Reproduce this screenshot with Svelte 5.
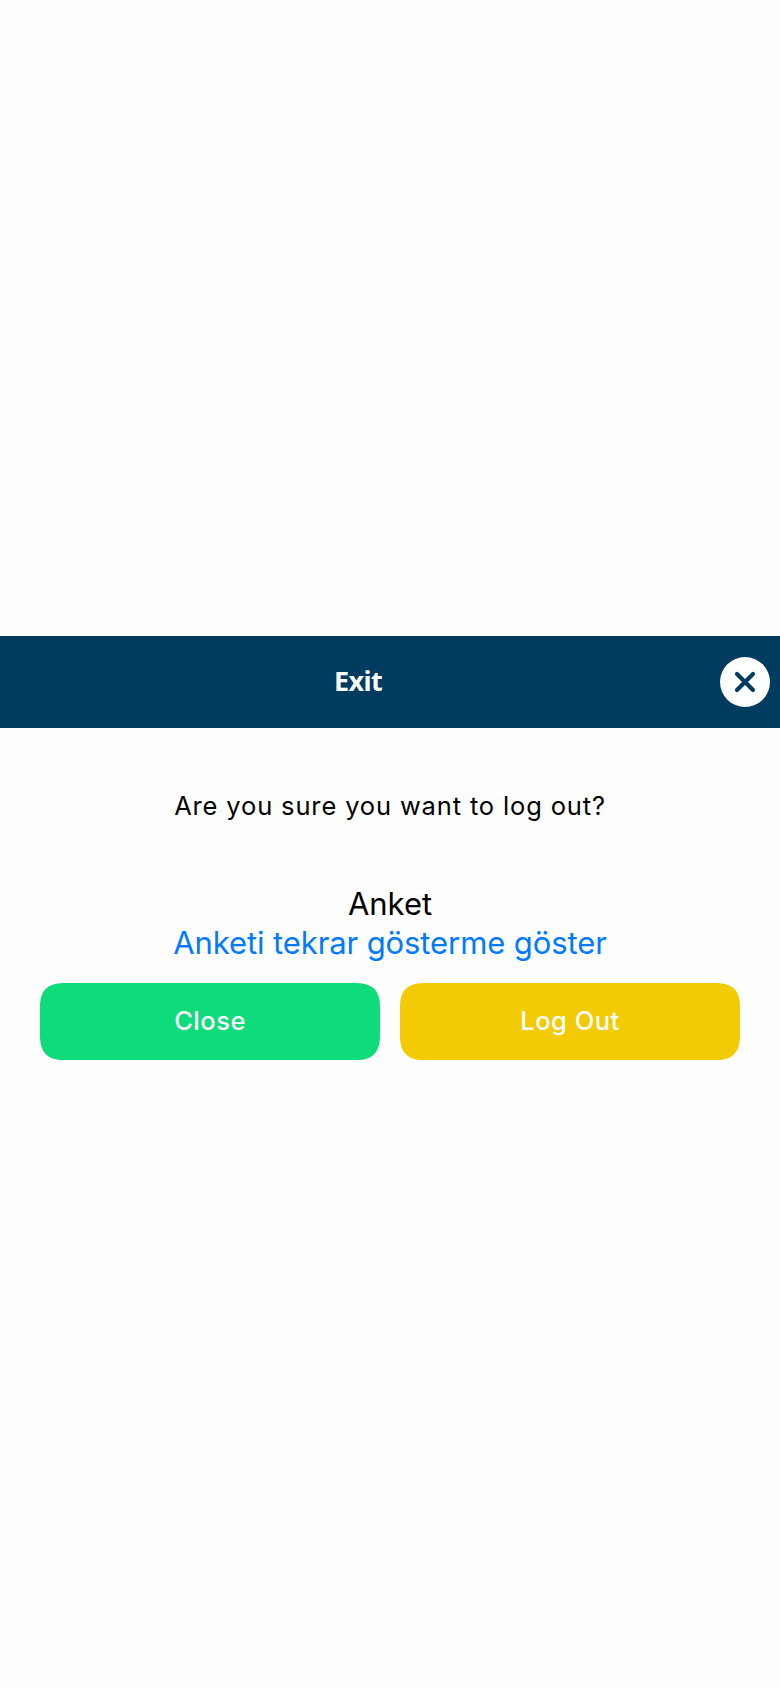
<script>
  const question = 'Are you sure you want to log out?';
</script>

<main>
  <header>
    <h1>Exit</h1>
    <button class="dismiss" aria-label="Close dialog">
      <svg viewBox="0 0 50 50" width="50" height="50">
        <path d="M17 17 33 33M33 17 17 33" />
      </svg>
    </button>
  </header>
  <p class="question"><span>{question}</span></p>
  <p class="survey"><span>Anket</span></p>
  <a class="toggle" href="#survey"><span>Anketi tekrar gösterme göster</span></a>
  <div class="actions">
    <button class="action close"><span>Close</span></button>
    <button class="action logout"><span>Log Out</span></button>
  </div>
</main>

<style>
  :global(body) { margin: 0; background: #fefefe; }
  main {
    box-sizing: border-box;
    width: 780px;
    height: 1688px;
    padding-top: 636px;
    display: flex;
    flex-direction: column;
    font-family: Inter, sans-serif;
    color: #000;
    background: #fefefe;
  }
  header {
    height: 92px;
    display: flex;
    align-items: center;
    background: #003c5f;
    padding-right: 10px;
  }
  h1 {
    flex: 1;
    margin: 0;
    padding: 0 4px 2px 0;
    text-align: center;
    color: #fff;
    font: 700 27px/40px "Noto Sans", sans-serif;
    letter-spacing: -0.6px;
  }
  button { border: 0; padding: 0; }
  .dismiss { width: 50px; height: 50px; border-radius: 50%; background: #fff; }
  .dismiss svg { display: block; }
  .dismiss path { stroke: #003c5f; stroke-width: 4.2; stroke-linecap: round; fill: none; }
  p { margin: 0; text-align: center; }
  .question { margin-top: 58px; font-size: 25.5px; line-height: 40px; letter-spacing: 0.85px; }
  .survey { margin-top: 58px; font-size: 31px; line-height: 39px; }
  .toggle { text-align: center; font-size: 31px; line-height: 39px; letter-spacing: -0.1px; color: #007aff; text-decoration: none; }
  .actions { display: grid; grid-template-columns: 1fr 1fr; gap: 20px; margin-top: 21px; padding: 0 40px; }
  .action {
    height: 77px;
    border-radius: 26px;
    corner-shape: superellipse(1.44);
    color: #fff;
    font: 500 25.5px/40px Inter, sans-serif;
    letter-spacing: 0.5px;
    padding-bottom: 2px;
  }
  .close { background: #0edb7a; }
  .logout { background: #f2cb05; }
</style>
